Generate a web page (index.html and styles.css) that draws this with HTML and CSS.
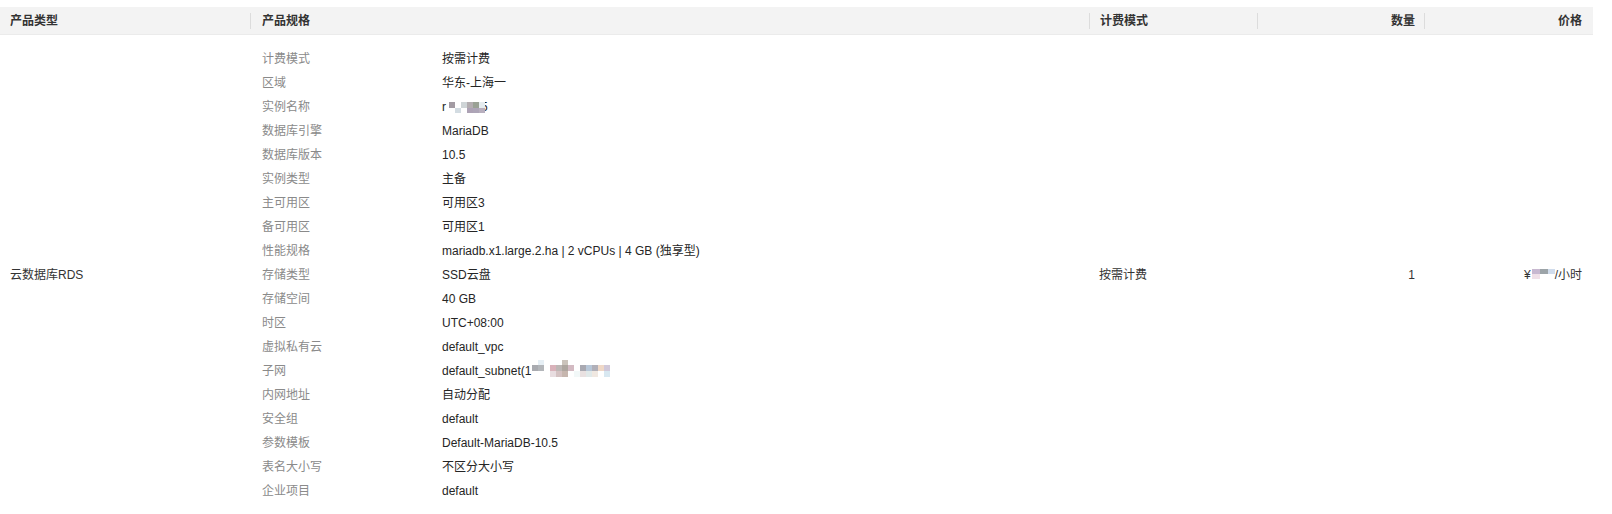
FILE: index.html
```html
<!DOCTYPE html>
<html lang="zh-CN">
<head>
<meta charset="utf-8">
<title>产品配置</title>
<link rel="stylesheet" href="styles.css">
</head>
<body>
<div class="table">
  <div class="thead">
    <div class="th c1">产品类型</div>
    <div class="th c2">产品规格</div>
    <div class="th c3">计费模式</div>
    <div class="th c4 right">数量</div>
    <div class="th c5 right">价格</div>
  </div>
  <div class="tbody">
    <div class="td c1">云数据库RDS</div>
    <div class="td c2">
      <dl class="spec">
        <dt>计费模式</dt><dd>按需计费</dd>
        <dt>区域</dt><dd>华东-上海一</dd>
        <dt>实例名称</dt><dd>r<span class="mosaic m-inst"><i class="k1"></i><i></i><i class="k2"></i><i class="k3"></i><i class="k4"></i><i class="k5"></i><i></i><i class="k6"></i><i></i><i class="k7"></i><i class="k8"></i><i class="k9"></i></span>5</dd>
        <dt>数据库引擎</dt><dd>MariaDB</dd>
        <dt>数据库版本</dt><dd>10.5</dd>
        <dt>实例类型</dt><dd>主备</dd>
        <dt>主可用区</dt><dd>可用区3</dd>
        <dt>备可用区</dt><dd>可用区1</dd>
        <dt>性能规格</dt><dd>mariadb.x1.large.2.ha | 2 vCPUs | 4 GB (独享型)</dd>
        <dt>存储类型</dt><dd>SSD云盘</dd>
        <dt>存储空间</dt><dd>40 GB</dd>
        <dt>时区</dt><dd>UTC+08:00</dd>
        <dt>虚拟私有云</dt><dd>default_vpc</dd>
        <dt>子网</dt><dd>default_subnet(1<span class="mosaic m-sub"><i></i><i class="s1"></i><i></i><i></i><i></i><i class="s2"></i><i></i><i></i><i></i><i></i><i></i><i></i><i></i><i class="s3"></i><i class="s4"></i><i></i><i class="s5"></i><i class="s6"></i><i class="s7"></i><i class="s8"></i><i></i><i class="s9"></i><i class="s10"></i><i class="s11"></i><i class="s12"></i><i class="s13"></i><i></i><i></i><i></i><i class="s14"></i><i class="s15"></i><i class="s16"></i><i></i><i class="s17"></i><i class="s18"></i><i class="s19"></i><i class="s20"></i><i></i><i class="s21"></i></span></dd>
        <dt>内网地址</dt><dd>自动分配</dd>
        <dt>安全组</dt><dd>default</dd>
        <dt>参数模板</dt><dd>Default-MariaDB-10.5</dd>
        <dt>表名大小写</dt><dd>不区分大小写</dd>
        <dt>企业项目</dt><dd>default</dd>
      </dl>
    </div>
    <div class="td c3">按需计费</div>
    <div class="td c4 right">1</div>
    <div class="td c5 right">¥<span class="mosaic m-price"><i class="p1"></i><i class="p2"></i><i class="p3"></i><i class="p4"></i><i></i><i></i></span>/小时</div>
  </div>
</div>
</body>
</html>
```
FILE: styles.css
```css
* { box-sizing: border-box; }
html, body { margin: 0; padding: 0; background: #fff; }
body {
  font-family: "Liberation Sans", "Noto Sans CJK SC", sans-serif;
  font-size: 12px;
  color: #333;
}
.table {
  width: 1593px;
  padding-top: 7px;
}
.thead, .tbody {
  display: grid;
  grid-template-columns: 250px 839px 168px 167px 169px;
}
.thead {
  background: #f3f3f3;
  padding: 6px 0;
  border-bottom: 1px solid #ebebeb;
  height: 28px;
}
.th {
  font-weight: bold;
  color: #333;
  line-height: 16px;
  padding: 0 10px;
  white-space: nowrap;
}
.th.c2, .th.c3, .th.c4, .th.c5 { border-left: 1px solid #dcdcdc; }
.th.c2 { padding-left: 11px; }
.th.c5, .td.c5 { padding-right: 11px; }
.th.c4, .td.c4 { padding-right: 9px; }
.right { text-align: right; }
.tbody { align-items: center; }
.td {
  padding: 0 10px;
  line-height: 24px;
  white-space: nowrap;
}
.td.c2 { padding: 12px 11px 12px 12px; }
.spec {
  margin: 0;
  display: grid;
  grid-template-columns: 180px 1fr;
}
.spec dt, .spec dd {
  margin: 0;
  line-height: 24px;
  height: 24px;
}
.spec dt { color: #8a8a8a; }
.spec dd { color: #252525; }

.mosaic {
  display: inline-grid;
  vertical-align: top;
}
.mosaic i { display: block; }
.m-inst {
  grid-template-columns: repeat(6, 6px);
  grid-template-rows: 6px 5px;
  margin: 7px -4px 0 3px;
  position: relative;
}
.k1 { background: #a39ba3; }
.k2 { background: #cfd5d7; }
.k3 { background: #b3adb0; }
.k4 { background: #9aa194; }
.k5 { background: #e5ecef; }
.k6 { background: #d3dce2; }
.k7 { background: #ada2b5; }
.k8 { background: #ada5b7; }
.k9 { background: #b8afbe; }

.m-sub {
  grid-template-columns: repeat(13, 6px);
  grid-template-rows: 5px 6px 6px;
  margin: 1px 0 0 1px;
}
.s1 { background: #e6eff5; }
.s2 { background: #cbc3bb; }
.s3 { background: #a9abb0; }
.s4 { background: #b3b6ba; }
.s5 { background: #d9b2ba; }
.s6 { background: #bdb7b5; }
.s7 { background: #aea69f; }
.s8 { background: #d3bac2; }
.s9 { background: #a9a9b1; }
.s10 { background: #b8c7d8; }
.s11 { background: #b1b0b9; }
.s12 { background: #efd8c7; }
.s13 { background: #d0c8d9; }
.s14 { background: #e8dde0; }
.s15 { background: #d4c2c2; }
.s16 { background: #c6b6ae; }
.s17 { background: #f2f8f8; }
.s18 { background: #e9e1e1; }
.s19 { background: #e1e9e9; }
.s20 { background: #f0e8e1; }
.s21 { background: #d8e8f1; }

.m-price {
  grid-template-columns: 8px 8px 7px;
  grid-template-rows: 5px 5px;
  margin: 6px 0 0 1px;
}
.p1 { background: #c8b8d0; }
.p2 { background: #9ca4a8; }
.p3 { background: #d0dcec; }
.p4 { background: #f0e0e8; }
```
